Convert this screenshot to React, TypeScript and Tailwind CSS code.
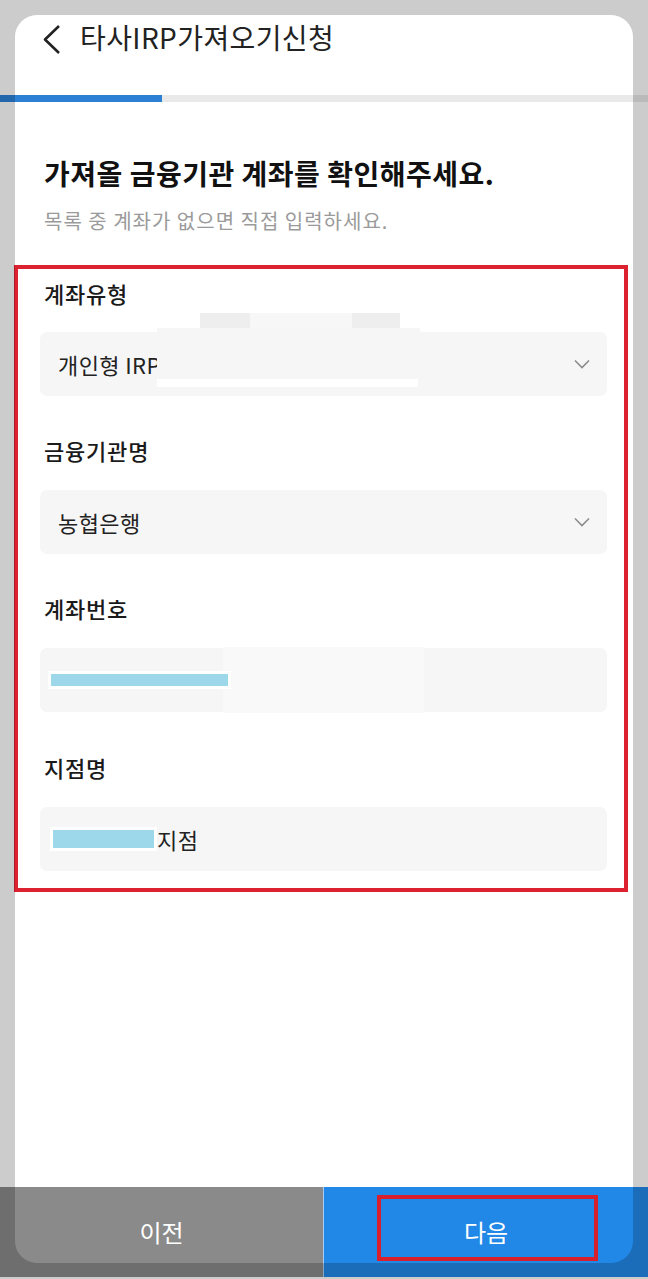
import React from "react";

const Chevron = () => (
  <svg width="16" height="10" viewBox="0 0 16 10" fill="none">
    <polyline points="1,1.5 8,8.5 15,1.5" stroke="#8c8c8c" strokeWidth="1.6" />
  </svg>
);

const Label = ({ children }: { children: React.ReactNode }) => (
  <div className="pl-[4px] text-[22px] leading-[30px] font-medium tracking-[0.8px] text-[#1a1a1a]">{children}</div>
);

const App = () => {
  return (
    <div className="relative flex h-[1279px] w-[648px] flex-col overflow-hidden bg-white font-['Noto_Sans_CJK_KR',sans-serif]">
      {/* header */}
      <div className="flex h-[95px] items-start">
        <div className="ml-[41px] mt-[24px]">
          <svg width="22" height="31" viewBox="0 0 22 31" fill="none">
            <polyline points="18,2 4,15.5 18,29" stroke="#222" strokeWidth="2.6" strokeLinejoin="round" />
          </svg>
        </div>
        <div className="ml-[17px] mt-[18px] text-[28px] leading-[38px] tracking-[0.4px] text-[#222]">타사IRP가져오기신청</div>
      </div>

      {/* progress */}
      <div className="h-[7px] bg-[#e9e9e9]">
        <div className="h-full w-[162px] bg-[#2b80d6]" />
      </div>

      <div className="px-[44px] pt-[52px]">
        <h1 className="text-[28px] leading-[38px] font-semibold tracking-[0.5px] text-[#111]">가져올 금융기관 계좌를 확인해주세요.</h1>
        <p className="mt-[15px] text-[20px] leading-[28px] tracking-[1px] text-[#9a9a9a]">목록 중 계좌가 없으면 직접 입력하세요.</p>
      </div>

      {/* form */}
      <div className="ml-[14px] mt-[30px] w-[614px] border-4 border-[#dc2230] pb-[17px] pl-[22px] pr-[17px] pt-[9px]">
        <Label>계좌유형</Label>
        <div className="relative mt-[24px] flex h-[64px] items-center justify-between rounded-[7px] bg-[#f6f6f6] pl-[18px] pr-[17px]">
          <span className="text-[22px] tracking-[0.4px] text-[#222]">개인형 IRP</span>
          <Chevron />
          <div className="absolute left-[160px] top-[-19px] h-[15px] w-[50px] bg-[#eeeeee]" />
          <div className="absolute left-[210px] top-[-19px] h-[15px] w-[102px] bg-[#f7f7f7]" />
          <div className="absolute left-[312px] top-[-19px] h-[15px] w-[48px] bg-[#eeeeee]" />
          <div className="absolute left-[117px] top-[-4px] h-[51px] w-[263px] bg-[#f6f6f6]" />
          <div className="absolute left-[117px] top-[47px] h-[8px] w-[261px] bg-white" />
        </div>

        <div className="mt-[39px]">
          <Label>금융기관명</Label>
        </div>
        <div className="mt-[25px] flex h-[64px] items-center justify-between rounded-[7px] bg-[#f6f6f6] pl-[18px] pr-[17px]">
          <span className="text-[22px] tracking-[0.4px] text-[#222]">농협은행</span>
          <Chevron />
        </div>

        <div className="mt-[39px]">
          <Label>계좌번호</Label>
        </div>
        <div className="relative mt-[25px] h-[64px] rounded-[7px] bg-[#f6f6f6]">
          <div className="absolute left-[183px] top-[-1px] h-[66px] w-[201px] bg-[#f9f9f9]" />
          <div className="absolute left-[8px] top-[23px] h-[18px] w-[183px] border-[3px] border-white bg-[#9dd8ea]" />
        </div>

        <div className="mt-[40px]">
          <Label>지점명</Label>
        </div>
        <div className="mt-[25px] flex h-[64px] items-center rounded-[7px] bg-[#f6f6f6] pl-[10px]">
          <span className="h-[24px] w-[107px] border-[3px] border-white bg-[#9dd8ea]" />
          <span className="text-[22px] tracking-[0.4px] text-[#222]">지점</span>
        </div>
      </div>

      <div className="flex-1" />

      {/* bottom buttons */}
      <div className="flex h-[90px]">
        <button className="flex w-[323px] items-center justify-center bg-[#8a8a8a] text-[24px] text-white">이전</button>
        <button className="relative flex flex-1 items-center justify-center border-l border-[#a9cdf0] bg-[#2288e8] text-[24px] text-white">
          다음
          <span className="absolute left-[53px] top-[8px] z-20 h-[66px] w-[221px] border-4 border-[#d81f2c]" />
        </button>
      </div>
      <div className="h-[2px]" />

      {/* dim overlay around the card */}
      <div className="pointer-events-none absolute bottom-[16px] left-[15px] right-[15px] top-[15px] z-10 rounded-[22px] shadow-[0_0_0_2000px_rgba(0,0,0,0.2)]" />
    </div>
  );
};

export default App;
